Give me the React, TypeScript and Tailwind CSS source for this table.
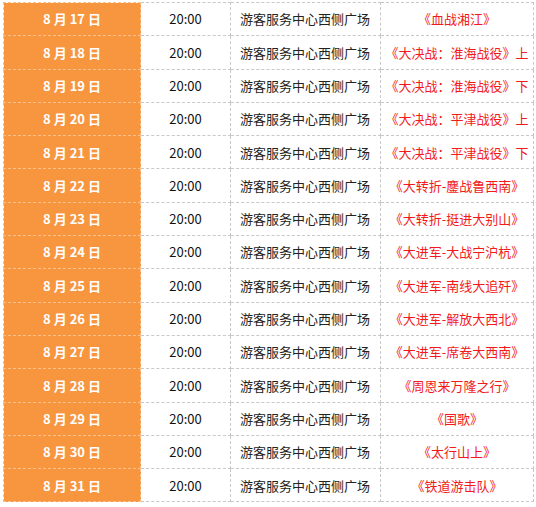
const shows = [
  { day: 17, title: '《血战湘江》' },
  { day: 18, title: '《大决战：淮海战役》上' },
  { day: 19, title: '《大决战：淮海战役》下' },
  { day: 20, title: '《大决战：平津战役》上' },
  { day: 21, title: '《大决战：平津战役》下' },
  { day: 22, title: '《大转折-鏖战鲁西南》' },
  { day: 23, title: '《大转折-挺进大别山》' },
  { day: 24, title: '《大进军-大战宁沪杭》' },
  { day: 25, title: '《大进军-南线大追歼》' },
  { day: 26, title: '《大进军-解放大西北》' },
  { day: 27, title: '《大进军-席卷大西南》' },
  { day: 28, title: '《周恩来万隆之行》' },
  { day: 29, title: '《国歌》' },
  { day: 30, title: '《太行山上》' },
  { day: 31, title: '《铁道游击队》' },
];

function App() {
  return (
    <div
      className="h-[507px] w-[536px] bg-white pl-[3px] pt-[2px]"
      style={{ fontFamily: '"Noto Sans CJK SC", "Noto Sans", sans-serif' }}
    >
      <table className="w-[530px] table-fixed border-collapse text-[13px]">
        <colgroup>
          <col className="w-[137px]" />
          <col className="w-[90px]" />
          <col className="w-[150px]" />
          <col className="w-[153px]" />
        </colgroup>
        <tbody>
          {shows.map((show) => (
            <tr key={show.day} className="h-[33.3px]">
              <td className="border border-dashed border-[#fbc08c] bg-[#f8953f] p-0 text-center font-bold text-white">
                8 月 {show.day} 日
              </td>
              <td className="border border-dashed border-[#c8c8c8] p-0 text-center text-[#111]">
                20:00
              </td>
              <td className="border border-dashed border-[#c8c8c8] p-0 pl-[9px] text-left text-[#222]">
                游客服务中心西侧广场
              </td>
              <td className="whitespace-nowrap border border-dashed border-[#c8c8c8] p-0 text-center text-[#f21a1a]">
                {show.title}
              </td>
            </tr>
          ))}
        </tbody>
      </table>
    </div>
  );
}

export default App;
